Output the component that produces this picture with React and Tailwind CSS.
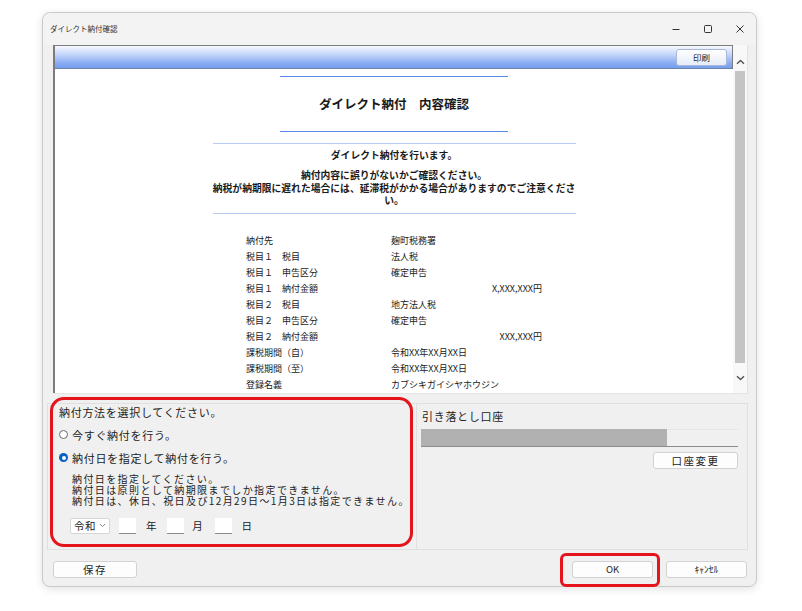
import React from "react";

const rows = [
  ["納付先", "麹町税務署"],
  ["税目１　税目", "法人税"],
  ["税目１　申告区分", "確定申告"],
  ["税目１　納付金額", "", "X,XXX,XXX円"],
  ["税目２　税目", "地方法人税"],
  ["税目２　申告区分", "確定申告"],
  ["税目２　納付金額", "", "XXX,XXX円"],
  ["課税期間（自）", "令和XX年XX月XX日"],
  ["課税期間（至）", "令和XX年XX月XX日"],
  ["登録名義", "カブシキガイシヤホウジン"],
];

const Chevron = ({ up }) => (
  <svg width="9" height="6" viewBox="0 0 9 6" className={up ? "rotate-180" : ""}>
    <path d="M1 1.2 L4.5 4.6 L8 1.2" fill="none" stroke="#555" strokeWidth="1.4" />
  </svg>
);

const Radio = ({ checked, label }) => (
  <div className="flex items-center h-[14px]">
    {checked ? (
      <span className="w-[9px] h-[9px] rounded-full bg-[#0a5fc4] flex items-center justify-center">
        <span className="w-[4px] h-[4px] rounded-full bg-white" />
      </span>
    ) : (
      <span className="w-[9px] h-[9px] rounded-full border border-[#6b6b6b] bg-white" />
    )}
    <span className="ml-[4px]">{label}</span>
  </div>
);

const Btn = ({ children, className = "" }) => (
  <button
    className={
      "h-[17px] bg-[#fdfdfd] border border-[#d2d2d2] rounded-[3px] text-[9.5px] text-[#222] flex items-center justify-center " +
      className
    }
  >
    {children}
  </button>
);

export default function App() {
  return (
    <div className="relative w-[802px] h-[611px] bg-white overflow-hidden pt-[12px] pl-[42px] font-['Noto_Sans_CJK_JP',sans-serif] text-[#1a1a1a]">
      {/* window */}
      <div className="w-[715px] h-[575px] rounded-[8px] border border-[#cacaca] bg-[#f0f0f0] shadow-[0_2px_8px_rgba(0,0,0,0.12)] flex flex-col">
        {/* title bar */}
        <div className="h-[32px] flex items-center justify-between bg-[#f3f3f3] rounded-t-[8px]">
          <span className="pl-[7px] text-[7.5px] text-[#333] leading-none">ダイレクト納付確認</span>
          <div className="flex h-full">
            <div className="w-[32px] flex items-center justify-center">
              <svg width="8" height="8" viewBox="0 0 8 8">
                <path d="M0.5 4.5 H7.5" stroke="#333" strokeWidth="1" />
              </svg>
            </div>
            <div className="w-[32px] flex items-center justify-center">
              <svg width="8" height="8" viewBox="0 0 8 8">
                <rect x="0.5" y="0.5" width="7" height="7" rx="1" fill="none" stroke="#333" strokeWidth="1" />
              </svg>
            </div>
            <div className="w-[32px] flex items-center justify-center">
              <svg width="8" height="8" viewBox="0 0 8 8">
                <path d="M0.5 0.5 L7.5 7.5 M7.5 0.5 L0.5 7.5" stroke="#333" strokeWidth="1" />
              </svg>
            </div>
          </div>
        </div>

        {/* preview frame */}
        <div className="ml-[10px] w-[695px] h-[349px] flex border-b border-[#e4e4e4]">
          <div className="w-[680px] flex flex-col border-l-2 border-t border-[#7c7c7c]">
            <div className="h-[23px] flex items-center justify-end pr-[5px] border-b border-r border-b-[#6f82a8] border-r-[#7c7c7c] bg-[linear-gradient(#f7f9ff,#c9d9fb_35%,#87aaf2_80%,#759ef0)]">
              <Btn className="w-[51px] h-[14px] !text-[8.5px] bg-[linear-gradient(#ffffff,#e6ecf8)] !border-[#a9b8d6]">印刷</Btn>
            </div>
            <div className="flex-1 bg-white overflow-hidden flex flex-col items-center">
              <div className="mt-[7px] w-[228px] h-[2px] bg-[#5b8ceb]" />
              <div className="mt-[18px] h-[20px] leading-[20px] text-[12.5px] font-bold">ダイレクト納付　内容確認</div>
              <div className="mt-[17px] w-[228px] h-[2px] bg-[#5b8ceb]" />
              <div className="mt-[11px] w-[363px] h-[2px] bg-[#b8cbf3]" />
              <div className="w-[363px] text-center text-[9.8px] font-bold">
                <div className="mt-[5px] leading-[14px]">ダイレクト納付を行います。</div>
                <div className="mt-[5.5px] leading-[14px]">納付内容に誤りがないかご確認ください。</div>
                <div className="leading-[12px]">
                  納税が納期限に遅れた場合には、延滞税がかかる場合がありますのでご注意ください。
                </div>
              </div>
              <div className="mt-[7px] w-[363px] h-[2px] bg-[#b8cbf3]" />
              <div className="mt-[20px] w-[296px] text-[9px]">
                {rows.map(([label, value, amount]) => (
                  <div key={label} className="h-[16px] flex items-center">
                    <span className="w-[145px]">{label}</span>
                    <span className="flex-1">{value}</span>
                    {amount && <span>{amount}</span>}
                  </div>
                ))}
              </div>
            </div>
          </div>
          {/* scrollbar */}
          <div className="w-[15px] flex flex-col bg-[#f8f8f8] border-r border-[#e2e2e2]">
            <div className="h-[26px] flex items-end justify-center pb-[6px]">
              <Chevron up />
            </div>
            <div className="h-[292px] w-[10px] mx-auto bg-[#c4c4c4]" />
            <div className="flex-1 flex items-center justify-center">
              <Chevron />
            </div>
          </div>
        </div>

        {/* bottom panels */}
        <div className="mt-[9px] ml-[4px] w-[701px] h-[147px] flex text-[11px] tracking-[0.7px] text-[#222]">
          <div className="w-[369px] border border-r-0 border-[#e0e0e0] pt-[1px] pl-[11px]">
            <div className="leading-[14px]">納付方法を選択してください。</div>
            <div className="mt-[8.5px] leading-[14px]">
              <Radio label="今すぐ納付を行う。" />
            </div>
            <div className="mt-[9px] leading-[14px]">
              <Radio checked label="納付日を指定して納付を行う。" />
            </div>
            <div className="mt-[8px] pl-[13px] leading-[11.3px] text-[10px] tracking-[1.4px] whitespace-nowrap">
              <div>納付日を指定してください。</div>
              <div>納付日は原則として納期限までしか指定できません。</div>
              <div>納付日は、休日、祝日及び12月29日～1月3日は指定できません。</div>
            </div>
            <div className="mt-[11.5px] pl-[11px] flex items-center h-[16px] text-[10.5px]">
              <div className="w-[40px] h-[16px] bg-white border border-[#d6d6d6] rounded-[2px] flex items-center pl-[3px] gap-[3px]">
                <span className="tracking-[0.5px]">令和</span>
                <svg width="7" height="5" viewBox="0 0 7 5">
                  <path d="M1 1 L3.5 3.6 L6 1" fill="none" stroke="#777" strokeWidth="0.9" />
                </svg>
              </div>
              <div className="ml-[9px] w-[17px] h-[16px] bg-white border-b border-[#8a8a8a]" />
              <span className="ml-[10px]">年</span>
              <div className="ml-[10px] w-[17px] h-[16px] bg-white border-b border-[#8a8a8a]" />
              <span className="ml-[8px]">月</span>
              <div className="ml-[12px] w-[17px] h-[16px] bg-white border-b border-[#8a8a8a]" />
              <span className="ml-[9px]">日</span>
            </div>
          </div>
          <div className="flex-1 border border-[#e0e0e0] pt-[5px] pl-[4px] flex flex-col">
            <div className="leading-[14px] pl-[1px]">引き落とし口座</div>
            <div className="mt-[6px] w-[317px] h-[18px] flex border-b border-[#8c8c8c]">
              <div className="w-[246px] bg-[#b1b1b1]" />
              <div className="flex-1 border-t border-[#e6e6e6]" />
            </div>
            <div className="mt-[5px] w-[317px] flex justify-end">
              <Btn className="w-[85px] h-[16px] !text-[10.5px] tracking-[1.5px]">口座変更</Btn>
            </div>
          </div>
        </div>

        {/* buttons */}
        <div className="mt-[11px] flex items-center justify-between">
          <Btn className="ml-[10px] w-[84px] !text-[10.5px] tracking-[1.5px]">保存</Btn>
          <div className="flex gap-[13px] mr-[9px]">
            <Btn className="w-[81px]">OK</Btn>
            <Btn className="w-[81px]">ｷｬﾝｾﾙ</Btn>
          </div>
        </div>
      </div>

      {/* red annotations */}
      <div className="absolute left-[50px] top-[397px] w-[363px] h-[150px] border-[3px] border-[#e5141c] rounded-[14px]" />
      <div className="absolute left-[560px] top-[553px] w-[100px] h-[34px] border-[3px] border-[#e5141c] rounded-[6px]" />
    </div>
  );
}
